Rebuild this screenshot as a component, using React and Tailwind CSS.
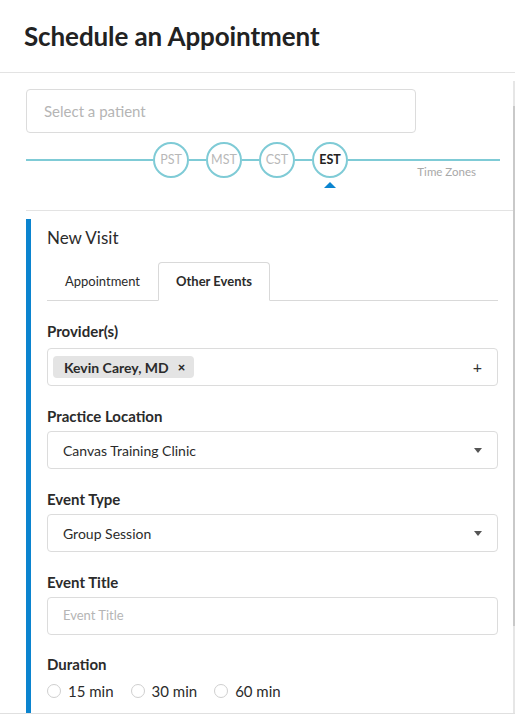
import React, { useState } from "react";

const zones = ["PST", "MST", "CST", "EST"];
const durations = ["15 min", "30 min", "60 min"];

function Caret() {
  return (
    <span className="w-0 h-0 border-l-[4px] border-r-[4px] border-t-[5px] border-l-transparent border-r-transparent border-t-[#555]" />
  );
}

function Field({ label, children }) {
  return (
    <div className="mt-[20px]">
      <div className="text-[15px] leading-[20px] font-bold text-[#2b2b2b] mb-[5px]">
        {label}
      </div>
      {children}
    </div>
  );
}

function SelectBox({ value }) {
  return (
    <div className="h-[38px] border border-[#dcdcdc] rounded-[4px] flex items-center justify-between pl-[15px] pr-[15px]">
      <span className="text-[14px] text-[#2b2b2b]">{value}</span>
      <Caret />
    </div>
  );
}

export default function App() {
  const [tab, setTab] = useState("other");
  const [zone, setZone] = useState("EST");

  return (
    <div className="w-[515px] h-[714px] bg-white border-b border-[#e0e0e0] flex flex-col font-['Lato',_'Noto_Sans',_sans-serif] overflow-hidden">
      <div className="h-[73px] shrink-0 border-b border-[#e3e3e3] flex items-center pl-[24px]">
        <h1 className="text-[26px] font-bold text-[#222] tracking-[-0.1px] mt-[1px]">
          Schedule an Appointment
        </h1>
      </div>

      <div className="flex flex-1 min-h-0">
        <div className="flex-1 min-w-0">
          {/* patient picker */}
          <div className="mt-[16px] ml-[26px] w-[390px] h-[44px] border border-[#dcdcdc] rounded-[4px] flex items-center pl-[17px] text-[15px] text-[#b5b5b5]">
            Select a patient
          </div>

          {/* time zone track */}
          <div className="flex items-start ml-[26px] w-[474px] mt-[9px]">
            <div className="w-[127px] h-[2px] mt-[17px] bg-[#7fcbd6]" />
            {zones.map((z, i) => (
              <React.Fragment key={z}>
                {i > 0 && <div className="w-[17px] h-[2px] mt-[17px] bg-[#7fcbd6]" />}
                <div className="flex flex-col items-center">
                  <button
                    onClick={() => setZone(z)}
                    className={
                      "w-[36px] h-[36px] rounded-full border-2 border-[#7fcbd6] bg-white flex items-center justify-center text-[12.5px] " +
                      (zone === z ? "font-bold text-[#222]" : "text-[#b8b8b8]")
                    }
                  >
                    {z}
                  </button>
                  {zone === z && (
                    <span className="mt-[4px] w-0 h-0 border-l-[6px] border-r-[6px] border-b-[6px] border-l-transparent border-r-transparent border-b-[#0b84cf]" />
                  )}
                </div>
              </React.Fragment>
            ))}
            <div className="flex-1 flex flex-col">
              <div className="h-[2px] mt-[17px] bg-[#7fcbd6]" />
              <div className="mt-[4px] pr-[24px] text-right text-[11.5px] leading-[13px] text-[#a8a8a8]">
                Time Zones
              </div>
            </div>
          </div>

          <div className="ml-[26px] mt-[22px] border-t border-[#e3e3e3]" />

          {/* visit card */}
          <div className="ml-[26px] mt-[8px] border-l-[5px] border-[#0b84cf] pl-[16px] pr-[15px] pb-[40px]">
            <div className="pt-[7px] text-[17px] leading-[24px] text-[#2b2b2b]">New Visit</div>

            <div className="mt-[12px] flex h-[39px] border-b border-[#d9d9d9]">
              <button
                onClick={() => setTab("appt")}
                className={
                  "w-[111px] pt-[1px] text-[13px] text-[#2b2b2b] " +
                  (tab === "appt"
                    ? "font-bold border border-[#d9d9d9] border-b-white rounded-t-[4px] bg-white -mb-px"
                    : "")
                }
              >
                Appointment
              </button>
              <button
                onClick={() => setTab("other")}
                className={
                  "w-[112px] pt-[1px] text-[13px] text-[#2b2b2b] " +
                  (tab === "other"
                    ? "font-bold border border-[#d9d9d9] border-b-white rounded-t-[4px] bg-white -mb-px"
                    : "")
                }
              >
                Other Events
              </button>
            </div>

            <div className="mt-[20px]">
              <div className="text-[15px] leading-[20px] font-bold text-[#2b2b2b] mb-[7px]">
                Provider(s)
              </div>
              <div className="h-[38px] border border-[#dcdcdc] rounded-[4px] flex items-center justify-between pl-[5px] pr-[15px]">
                <span className="h-[22px] bg-[#e4e4e4] rounded-[4px] flex items-center pl-[11px] pr-[9px] gap-[9px] text-[14px] font-bold text-[#2b2b2b]">
                  Kevin Carey, MD
                  <span className="text-[13px] font-black leading-none">×</span>
                </span>
                <span className="text-[16px] text-[#333]">+</span>
              </div>
            </div>

            <Field label="Practice Location">
              <SelectBox value="Canvas Training Clinic" />
            </Field>

            <Field label="Event Type">
              <SelectBox value="Group Session" />
            </Field>

            <Field label="Event Title">
              <div className="h-[38px] border border-[#dcdcdc] rounded-[4px] flex items-center pl-[15px] text-[13px] text-[#b5b5b5]">
                Event Title
              </div>
            </Field>

            <div className="mt-[19px]">
              <div className="text-[15px] leading-[20px] font-bold text-[#2b2b2b]">Duration</div>
              <div className="mt-[7px] flex items-center gap-[17px]">
                {durations.map((d) => (
                  <label key={d} className="flex items-center gap-[7px] text-[15px] leading-[20px] text-[#2b2b2b]">
                    <span className="w-[14px] h-[14px] rounded-full border border-[#cfcfcf] bg-white" />
                    {d}
                  </label>
                ))}
              </div>
            </div>
          </div>
        </div>

        {/* scroll track */}
        <div className="w-[2px] shrink-0 mt-[8px] bg-[#e6e6e6] flex flex-col">
          <div className="mt-[25px] h-[520px] bg-[#c9c9c9]" />
        </div>
      </div>
    </div>
  );
}
